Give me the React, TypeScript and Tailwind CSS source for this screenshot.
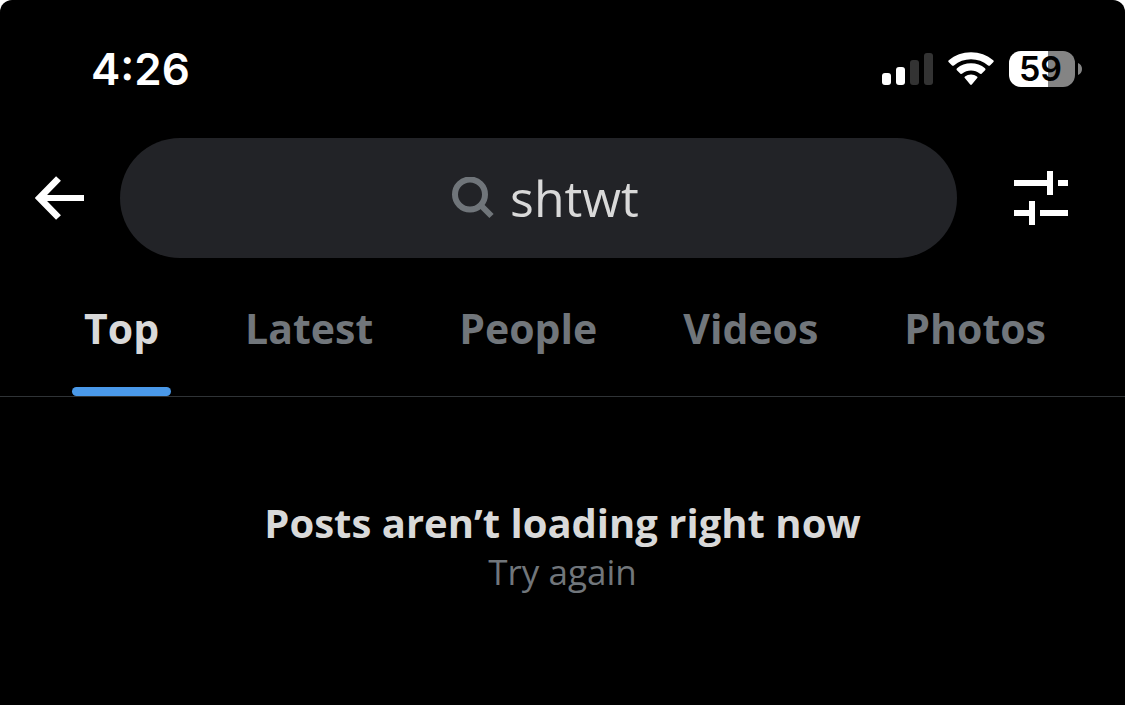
import { useState } from "react";

const tabs = ["Top", "Latest", "People", "Videos", "Photos"];

function Signal() {
  return (
    <svg className="h-9 w-[52px]" viewBox="0 0 52 36" role="img" aria-label="Cellular signal">
      <rect x="0" y="22" width="9" height="12" rx="3" fill="#fff" />
      <rect x="14" y="16" width="9" height="18" rx="3" fill="#fff" />
      <rect x="28" y="9" width="9" height="25" rx="3" fill="#333" />
      <rect x="42" y="2" width="9" height="32" rx="3" fill="#333" />
    </svg>
  );
}

function Wifi() {
  return (
    <svg className="h-9 w-[46px]" viewBox="0 0 46 36" fill="#fff" role="img" aria-label="Wi-Fi">
      <path d="M0.8 11.2 Q-0.3 10.2 0.8 9.2 C7 4 14.5 1.2 23 1.2 S39 4 45.2 9.2 Q46.3 10.2 45.2 11.2 L42.2 14.3 Q41.2 15.3 40.1 14.4 C35.3 10.4 29.4 8.2 23 8.2 S10.7 10.4 5.9 14.4 Q4.8 15.3 3.8 14.3 Z" />
      <path d="M8.9 19.2 Q7.9 18.2 9 17.2 C12.8 14 17.7 12.2 23 12.2 S33.2 14 37 17.2 Q38.1 18.2 37.1 19.2 L33.8 22.4 Q32.8 23.4 31.7 22.5 C29.3 20.6 26.3 19.4 23 19.4 S16.7 20.6 14.3 22.5 Q13.2 23.4 12.2 22.4 Z" />
      <path d="M16.8 27.1 Q15.9 26.2 17 25.4 C18.7 24.1 20.8 23.4 23 23.4 S27.3 24.1 29 25.4 Q30.1 26.2 29.2 27.1 L23.8 33.5 Q23 34.3 22.2 33.5 Z" />
    </svg>
  );
}

function Battery() {
  return (
    <div className="flex items-center gap-[3px]">
      <div className="flex h-9 w-[66px] items-center justify-center rounded-[12px] bg-linear-to-r from-white from-59% to-[#848484] to-59% pr-[3px] text-[34px] leading-none font-semibold text-black">
        59
      </div>
      <svg className="h-3 w-1" viewBox="0 0 4 12" aria-hidden="true">
        <path d="M0 0C2.500 1 4 3.300 4 6S2.500 11 0 12Z" fill="#848484" />
      </svg>
    </div>
  );
}

export default function App() {
  const [active, setActive] = useState("Top");
  return (
    <div className="min-h-screen bg-white">
      <main className="min-h-screen rounded-t-[12px] bg-black font-['Open_Sans',sans-serif]">
        <div className="flex h-[138px] items-center justify-between pr-[43px] pl-[91px] font-['Inter',sans-serif] text-white">
          <time className="text-[44px] leading-none font-semibold">4:26</time>
          <div className="flex items-center">
            <Signal />
            <span className="w-[14px]" />
            <Wifi />
            <span className="w-[15px]" />
            <Battery />
          </div>
        </div>

        <header className="flex items-center pr-[57px] pl-[35px]">
          <button aria-label="Back" className="shrink-0">
            <svg className="h-11 w-[49px]" viewBox="0 0 49 44" fill="none" stroke="#fff">
              <path d="M49 22H5" strokeWidth="6" />
              <path d="M23.500 2.500 4.500 22 23.500 41.500" strokeWidth="6.800" />
            </svg>
          </button>
          <label className="mr-[57px] ml-9 flex h-[120px] flex-1 items-center justify-center rounded-full bg-[#222327] pl-[22px]">
            <svg className="h-[42px] w-[42px]" viewBox="0 0 42 42" fill="none" stroke="#70757a" strokeWidth="6">
              <circle cx="18" cy="17.500" r="15" />
              <path d="m28.500 28 11 11" />
            </svg>
            <input
              type="text"
              aria-label="Search"
              defaultValue="shtwt"
              className="[field-sizing:content] h-20 bg-transparent pr-2 pl-4 text-[50px] leading-[80px] text-[#d9d9d9] outline-none"
            />
          </label>
          <button aria-label="Search filters" className="shrink-0">
            <svg className="h-[54px] w-[54px]" viewBox="0 0 54 54" fill="#fff">
              <path d="M0 9H33V0H39V24H33V15H0ZM44 9H54V15H44ZM0 39H15V30H21V54H15V45H0ZM26 39H54V45H26Z" />
            </svg>
          </button>
        </header>

        <nav className="flex h-[139px] justify-between border-b border-[#2f3336] pr-[67px] pl-[72px]">
          {tabs.map((tab) => (
            <button
              key={tab}
              onClick={() => setActive(tab)}
              className={`flex flex-col justify-between px-3 pt-[38px] text-[41px] leading-[64px] font-bold ${
                active === tab ? "text-[#d9d9d9]" : "text-[#71767b]"
              }`}
            >
              {tab}
              <span className={`-mx-3 h-[9px] self-stretch rounded-full ${active === tab ? "bg-[#4a99e9]" : ""}`} />
            </button>
          ))}
        </nav>

        <section className="flex flex-col items-center pt-[100px] text-center">
          <h1 className="text-[40px] leading-[52px] font-bold text-[#d9d9d9]">Posts aren’t loading right now</h1>
          <button className="text-[35px] leading-[46px] text-[#71767b]">Try again</button>
        </section>
      </main>
    </div>
  );
}
